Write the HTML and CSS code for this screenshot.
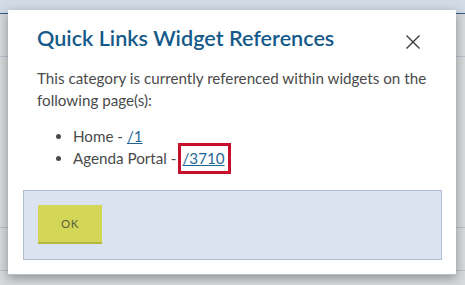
FILE: index.html
```html
<!DOCTYPE html>
<html lang="en">
<head>
<meta charset="utf-8">
<title>Quick Links Widget References</title>
<link rel="stylesheet" href="styles.css">
</head>
<body>
<div class="page">
  <div class="page-header"></div>
  <div class="page-rows">
    <div class="row"></div>
    <div class="row row-tall"></div>
    <div class="row"></div>
    <div class="row-rest"></div>
  </div>
</div>
<div class="dialog" role="dialog" aria-labelledby="dlg-title">
  <div class="dialog-head">
    <h2 id="dlg-title" class="dialog-title">Quick Links Widget References</h2>
    <button class="close" aria-label="Close">
      <svg width="16" height="16" viewBox="0 0 16 16" aria-hidden="true"><path d="M1.5 1.5 L14.5 14.5 M14.5 1.5 L1.5 14.5" stroke="#3a3a3a" stroke-width="1.4" fill="none"/></svg>
    </button>
  </div>
  <div class="dialog-body">
    <p class="intro">This category is currently referenced within widgets on the following page(s):</p>
    <ul class="refs">
      <li>Home - <a href="#">/1</a></li>
      <li>Agenda Portal -<a href="#" class="highlight">/3710</a></li>
    </ul>
  </div>
  <div class="dialog-foot">
    <button class="ok">OK</button>
  </div>
</div>
</body>
</html>
```
FILE: styles.css
```css
html, body {
  margin: 0;
  padding: 0;
}
body {
  width: 465px;
  height: 285px;
  overflow: hidden;
  background: #d8d9db;
  font-family: "Lato", "Liberation Sans", sans-serif;
  position: relative;
}
.page {
  height: 285px;
  display: flex;
  flex-direction: column;
}
.page-header {
  height: 13px;
  flex: none;
  background: #d3dbe6;
  border-bottom: 1px solid #2e5b88;
}
.page-rows {
  display: flex;
  flex-direction: column;
  flex: 1;
}
.row {
  height: 42px;
  flex: none;
  border-bottom: 1px solid #b9c2cc;
}
.row-tall {
  height: 170px;
}
.row-rest {
  flex: 1;
}
.dialog {
  position: absolute;
  left: 8px;
  top: 10px;
  width: 448px;
  height: 265px;
  box-sizing: border-box;
  background: #fff;
  border-bottom: 1px solid #b3c0d0;
  box-shadow: 0 3px 10px rgba(0, 0, 0, 0.35);
  display: flex;
  flex-direction: column;
}
.dialog-head {
  display: flex;
  align-items: flex-start;
  justify-content: space-between;
  padding: 15px 35px 0 29px;
}
.dialog-title {
  margin: 0;
  font-size: 21.6px;
  font-weight: 600;
  line-height: 26px;
  color: #155a8a;
}
.close {
  border: 0;
  background: none;
  padding: 0;
  margin-top: 9px;
  width: 16px;
  height: 16px;
  display: flex;
}
.dialog-body {
  padding: 16px 29px 0 29px;
  color: #4a4a4a;
  font-size: 15.2px;
  line-height: 22px;
  flex: 1;
}
.intro {
  margin: 0;
}
.refs {
  margin: 14px 0 0 0;
  padding-left: 36px;
}
.refs a {
  color: #1f6696;
}
.highlight {
  display: inline-block;
  line-height: 25px;
  padding: 0 3px 0 1px;
  margin: -5px 0 -5px 2px;
  border: 3px solid #c8102e;
}
.dialog-foot {
  margin: 0 14px 14px 15px;
  height: 70px;
  flex: none;
  box-sizing: border-box;
  background: #dae3ef;
  border: 1px solid #aebdd0;
  padding: 14px;
  display: flex;
  align-items: flex-start;
}
.ok {
  width: 64px;
  height: 39px;
  border: 0;
  border-bottom: 2px solid #b6b842;
  background: #d4d657;
  color: #56633d;
  font-family: "Lato", "Liberation Sans", sans-serif;
  font-size: 11.5px;
  letter-spacing: 0.5px;
  padding: 0;
}
```
